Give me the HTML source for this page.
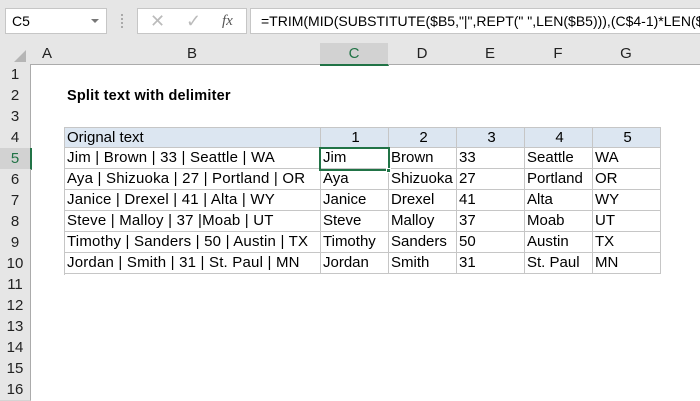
<!DOCTYPE html><html><head><style>
body{margin:0;width:700px;height:400px;background:#fff;font-family:"Liberation Sans",sans-serif;position:relative;overflow:hidden}
.a{position:absolute;box-sizing:border-box}
.ch{position:absolute;top:43px;height:21px;border-right:1px solid #d4d4d4;border-bottom:1px solid #ababab;background:#e6e6e6;text-align:center;font-size:15px;line-height:21px;color:#222}
.rh{position:absolute;left:0;width:30px;height:21px;border-bottom:1px solid #d4d4d4;border-right:1px solid #ababab;background:#e6e6e6;text-align:center;font-size:15px;line-height:21px;color:#222}
.c{position:absolute;height:21px;font-size:15px;line-height:20px;padding-left:2px;box-sizing:border-box;border-right:1px solid #c6c6c6;border-bottom:1px solid #c6c6c6;white-space:nowrap;overflow:hidden;color:#000}
</style></head><body>
<div class="a" style="left:0;top:0;width:700px;height:43px;background:#e6e6e6"></div>
<div class="a" style="left:5px;top:8px;width:102px;height:26px;background:#fff;border:1px solid #c6c6c6;font-size:14px;line-height:24px;padding-left:6px">C5</div>
<div class="a" style="left:91px;top:19px;width:0;height:0;border-left:4px solid transparent;border-right:4px solid transparent;border-top:4px solid #777"></div>
<div class="a" style="left:121px;top:14px;width:2px;height:14px;border-left:2px dotted #aaa"></div>
<div class="a" style="left:137px;top:8px;width:110px;height:26px;background:#fff;border:1px solid #c6c6c6"></div>
<div class="a" style="left:150px;top:8px;font-size:18px;line-height:26px;color:#bbb">✕</div>
<div class="a" style="left:186px;top:8px;font-size:18px;line-height:26px;color:#bbb">✓</div>
<div class="a" style="left:222px;top:8px;font-size:15px;line-height:26px;color:#555;font-family:'Liberation Serif',serif;font-style:italic">fx</div>
<div class="a" style="left:250px;top:8px;width:450px;height:26px;background:#fff;border:1px solid #c6c6c6;border-right:none;font-size:14px;line-height:24px;padding-left:10px;white-space:nowrap;overflow:hidden">=TRIM(MID(SUBSTITUTE($B5,"|",REPT(" ",LEN($B5))),(C$4-1)*LEN($B5)+1,LEN($B5)))</div>
<div class="ch" style="left:0;width:30px"></div>
<div class="a" style="left:14px;top:50px;width:0;height:0;border-left:12px solid transparent;border-bottom:12px solid #b5b5b5"></div>
<div class="ch" style="left:30px;width:34px">A</div>
<div class="ch" style="left:64px;width:256px">B</div>
<div class="ch" style="left:320px;width:68px;background:#d2d2d2;border-bottom:2px solid #217346;color:#217346">C</div>
<div class="ch" style="left:388px;width:68px">D</div>
<div class="ch" style="left:456px;width:68px">E</div>
<div class="ch" style="left:524px;width:68px">F</div>
<div class="ch" style="left:592px;width:68px">G</div>
<div class="ch" style="left:660px;width:40px;border-right:none"></div>
<div id="rows"></div>
<div class="rh" style="top:64px">1</div><div class="rh" style="top:85px">2</div><div class="rh" style="top:106px">3</div><div class="rh" style="top:127px">4</div>
<div class="rh" style="top:148px;background:#d2d2d2;color:#217346;border-right:2px solid #217346">5</div>
<div class="rh" style="top:169px">6</div><div class="rh" style="top:190px">7</div><div class="rh" style="top:211px">8</div><div class="rh" style="top:232px">9</div><div class="rh" style="top:253px">10</div><div class="rh" style="top:274px">11</div><div class="rh" style="top:295px">12</div><div class="rh" style="top:316px">13</div><div class="rh" style="top:337px">14</div><div class="rh" style="top:358px">15</div><div class="rh" style="top:379px">16</div>
<div class="a" style="left:67px;top:86px;font-size:14.5px;font-weight:bold;line-height:21px;letter-spacing:0.2px">Split text with delimiter</div>
<div class="a" style="left:64px;top:127px;width:597px;height:148px;border-left:1px solid #c6c6c6;border-top:1px solid #c6c6c6"></div>
<div class="c" style="left:65px;top:128px;width:256px;height:20px;background:#dce6f1">Orignal text</div>
<div class="c" style="left:321px;top:128px;width:68px;height:20px;background:#dce6f1;text-align:center">1</div>
<div class="c" style="left:389px;top:128px;width:68px;height:20px;background:#dce6f1;text-align:center">2</div>
<div class="c" style="left:457px;top:128px;width:68px;height:20px;background:#dce6f1;text-align:center">3</div>
<div class="c" style="left:525px;top:128px;width:68px;height:20px;background:#dce6f1;text-align:center">4</div>
<div class="c" style="left:593px;top:128px;width:68px;height:20px;background:#dce6f1;text-align:center">5</div>
<script>
var d=[["Jim | Brown | 33 | Seattle | WA","Jim","Brown","33","Seattle","WA"],["Aya | Shizuoka | 27 | Portland | OR","Aya","Shizuoka","27","Portland","OR"],["Janice | Drexel | 41 | Alta | WY","Janice","Drexel","41","Alta","WY"],["Steve | Malloy | 37 |Moab | UT","Steve","Malloy","37","Moab","UT"],["Timothy | Sanders | 50 | Austin | TX","Timothy","Sanders","50","Austin","TX"],["Jordan | Smith | 31 | St. Paul | MN","Jordan","Smith","31","St. Paul","MN"]];
var xs=[65,321,389,457,525,593],ws=[256,68,68,68,68,68],h="";
d.forEach(function(r,i){r.forEach(function(t,j){h+='<div class="c" style="left:'+xs[j]+'px;top:'+(148+i*21)+'px;width:'+ws[j]+'px;'+(j==0?'letter-spacing:0.2px':'')+'">'+t+'</div>';});});
document.getElementById("rows").outerHTML=h;
</script>
<div class="a" style="left:319px;top:147px;width:71px;height:24px;border:2px solid #217346"></div>
<div class="a" style="left:386px;top:168px;width:5px;height:5px;background:#217346;border:1px solid #fff"></div>
</body></html>
